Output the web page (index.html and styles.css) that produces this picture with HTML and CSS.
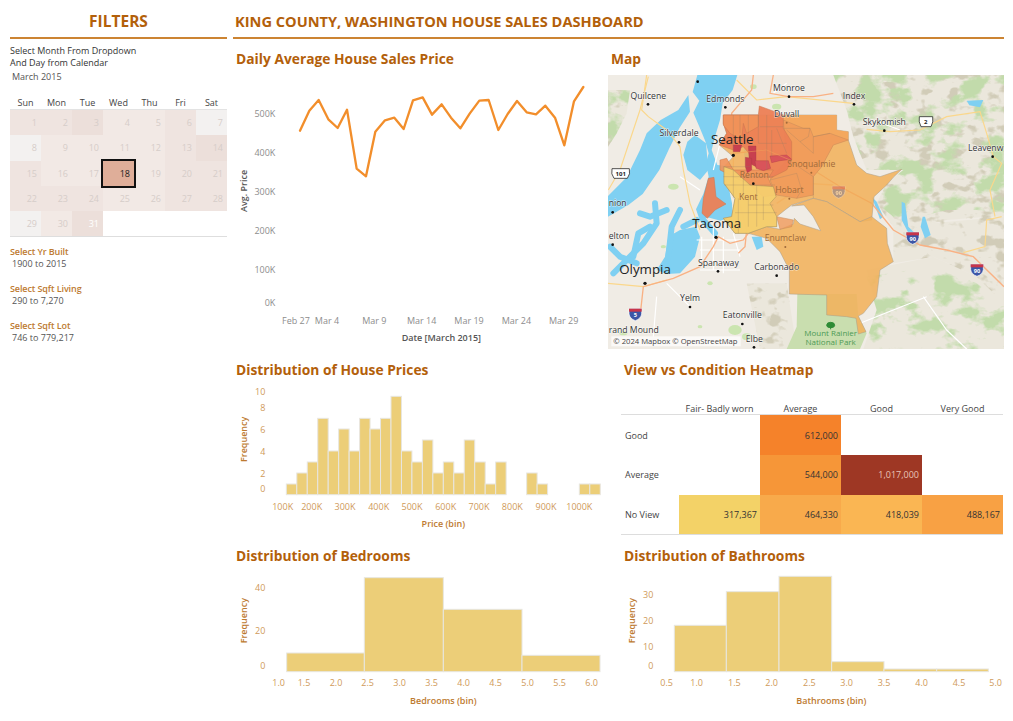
FILE: index.html
```html
<!DOCTYPE html>
<html lang="en">
<head>
<meta charset="utf-8">
<title>King County House Sales Dashboard</title>
<link rel="stylesheet" href="styles.css">
</head>
<body>
<div class="page">
  <aside class="sidebar">
    <h1 class="head head-center">FILTERS</h1>
    <p class="intro">Select Month From Dropdown<br>And Day from Calendar</p>
    <p class="month">March 2015</p>
    <div class="weekdays"><span>Sun</span><span>Mon</span><span>Tue</span><span>Wed</span><span>Thu</span><span>Fri</span><span>Sat</span></div>
    <div class="calendar">
      <div class="s2">1</div><div class="s2">2</div><div class="s3">3</div><div class="s1">4</div><div class="s1">5</div><div class="s2">6</div><div class="s0">7</div>
      <div class="s0">8</div><div class="s1">9</div><div class="s1">10</div><div class="s1">11</div><div class="s1">12</div><div class="s2">13</div><div class="s3">14</div>
      <div class="s2">15</div><div class="s1">16</div><div class="s1">17</div><div class="sel">18</div><div class="s1">19</div><div class="s2">20</div><div class="s2">21</div>
      <div class="s2">22</div><div class="s2">23</div><div class="s2">24</div><div class="s1">25</div><div class="s1">26</div><div class="s2">27</div><div class="s2">28</div>
      <div class="s0">29</div><div class="s1">30</div><div class="s3 wht">31</div><div class="blank"></div><div class="blank"></div><div class="blank"></div><div class="blank"></div>
    </div>
    <div class="filters">
      <div class="filter"><h3>Select Yr Built</h3><p>1900 to 2015</p></div>
      <div class="filter"><h3>Select Sqft Living</h3><p>290 to 7,270</p></div>
      <div class="filter"><h3>Select Sqft Lot</h3><p>746 to 779,217</p></div>
    </div>
  </aside>

  <main class="main">
    <h1 class="head head-left">KING COUNTY, WASHINGTON HOUSE SALES DASHBOARD</h1>
    <div class="grid">
      <section class="panel row1">
        <h2 class="title t-top">Daily Average House Sales Price</h2>
        <svg class="chart c-line" viewBox="9 87 1125 843" role="img">
          <g class="lbl end">
            <text x="136" y="230">500K</text><text x="136" y="348">400K</text><text x="136" y="466">300K</text><text x="136" y="583">200K</text><text x="136" y="700">100K</text><text x="136" y="799">0K</text>
          </g>
          <g class="lbl mid">
            <text x="198" y="851">Feb 27</text><text x="291" y="851">Mar 4</text><text x="433" y="851">Mar 9</text><text x="575" y="851">Mar 14</text><text x="717" y="851">Mar 19</text><text x="859" y="851">Mar 24</text><text x="1001" y="851">Mar 29</text>
          </g>
          <text class="axis dark mid" x="634" y="903">Date [March 2015]</text>
          <text class="axis dark mid" transform="translate(52 453) rotate(-90)">Avg. Price</text>
          <polyline class="trend" points="210,272 238,212 266,180 295,238 323,264 351,209 380,386 408,409 436,275 465,241 493,233 521,267 549,181 578,172 606,224 635,193 663,233 691,265 719,221 748,182 776,180 805,270 833,222 861,183 890,217 918,223 946,197 975,233 1003,316 1032,184 1060,141"/>
        </svg>
      </section>

      <section class="panel row1">
        <h2 class="title t-top">Map</h2>
        <svg class="map" viewBox="24 15 1188 822" role="img">
          <defs>
            <filter id="terrain" x="0" y="0" width="100%" height="100%" color-interpolation-filters="sRGB">
              <feTurbulence type="fractalNoise" baseFrequency="0.013 0.019" numOctaves="4" seed="7" result="n"/>
              <feColorMatrix in="n" type="matrix" values="0 0 0 0 0.76  0 0 0 0 0.86  0 0 0 0 0.67  5 5 0 0 -4.9" result="g"/>
              <feComposite in="g" in2="SourceAlpha" operator="in"/>
            </filter>
            <filter id="rock" x="0" y="0" width="100%" height="100%" color-interpolation-filters="sRGB">
              <feTurbulence type="fractalNoise" baseFrequency="0.022 0.03" numOctaves="3" seed="3" result="n"/>
              <feColorMatrix in="n" type="matrix" values="0 0 0 0 0.82  0 0 0 0 0.80  0 0 0 0 0.72  5 5 0 0 -5.3" result="g"/>
              <feComposite in="g" in2="SourceAlpha" operator="in"/>
            </filter>
            <clipPath id="mapclip"><rect x="24" y="15" width="1188" height="822"/></clipPath>
          </defs>
          <g clip-path="url(#mapclip)">
            <rect class="land" x="24" y="15" width="1188" height="822"/>
            <g class="mt-base">
              <path d="M700,15 L1212,15 L1212,440 L1160,440 L1040,450 L960,470 L880,470 L830,400 L860,340 L910,300 L800,300 L760,200 L740,120 Z"/>
              <path d="M24,60 L90,60 L80,130 L50,190 L24,230 Z"/>
              <path d="M880,470 L1212,440 L1212,700 L1130,620 L1000,560 L880,580 Z"/>
              <path d="M800,600 L1000,560 L1130,620 L1212,680 L1212,837 L790,837 L830,720 Z"/>
              <path d="M440,640 L560,640 L590,837 L480,837 Z"/>
            </g>
            <g class="mt-rock" filter="url(#rock)">
              <path d="M700,15 L1212,15 L1212,700 L1130,620 L1000,560 L880,580 L880,470 L830,400 L860,340 L910,300 L800,300 L760,200 L740,120 Z"/>
              <path d="M440,640 L560,640 L590,837 L480,837 Z"/>
              <path d="M24,60 L90,60 L80,130 L50,190 L24,230 Z"/>
            </g>
            <g class="mt-green" filter="url(#terrain)">
              <path d="M700,15 L1212,15 L1212,430 L1130,420 L1040,420 L960,440 L880,440 L830,400 L860,340 L910,300 L800,300 L760,200 L740,120 Z"/>
              <path d="M24,60 L90,60 L80,130 L50,190 L24,230 Z"/>
              <path d="M800,620 L1000,590 L1130,640 L1212,700 L1212,837 L790,837 L830,720 Z"/>
            </g>
            <path class="park" d="M592,672 L770,672 L775,740 L800,790 L780,837 L560,837 L590,770 Z"/>
            <g class="parks">
              <ellipse cx="220" cy="350" rx="16" ry="9"/><ellipse cx="405" cy="780" rx="20" ry="15"/><ellipse cx="440" cy="800" rx="14" ry="10"/>
              <ellipse cx="130" cy="330" rx="9" ry="5"/><ellipse cx="190" cy="530" rx="8" ry="5"/><ellipse cx="530" cy="110" rx="14" ry="9"/>
              <ellipse cx="330" cy="640" rx="8" ry="6"/><ellipse cx="70" cy="790" rx="12" ry="6"/><ellipse cx="300" cy="770" rx="7" ry="5"/>
              <ellipse cx="460" cy="50" rx="10" ry="7"/>
            </g>
            <g class="water">
              <path d="M292,15 L412,15 L398,60 L368,100 L360,150 L348,190 L335,240 L352,285 L398,290 L382,332 L396,400 L398,438 L362,452 L322,442 L300,452 L288,418 L310,372 L326,320 L318,280 L326,250 L316,214 L298,170 L280,128 L298,92 L278,66 Z"/>
              <path d="M235,120 L265,75 L270,125 L238,175 L208,235 L178,300 L128,372 L85,405 L24,440 L24,378 L80,322 L120,240 L140,190 L182,150 Z"/>
              <path d="M262,215 L285,195 L318,220 L325,300 L300,330 L262,300 L250,255 Z"/>
              <path d="M205,500 L240,480 L288,470 L300,500 L285,560 L240,610 L200,612 L170,600 L195,560 Z"/>
              <path d="M425,160 L440,150 L455,230 L450,305 L436,310 L432,240 Z"/>
              <path d="M455,500 L485,500 L490,530 L470,540 Z"/>
              <path d="M1100,92 L1150,90 L1140,112 L1108,106 Z"/>
              <path d="M905,395 L915,400 L925,470 L945,490 L925,488 L905,450 Z"/>
              <path d="M968,440 L975,440 L992,495 L975,505 L962,470 Z"/>
              <path d="M815,380 L830,395 L850,440 L840,448 Z"/>
            </g>
            <g class="water-line">
              <path d="M165,400 L170,460 L130,520 L70,580 L40,610"/>
              <path d="M240,420 L215,470 L205,560"/>
              <path d="M290,450 L250,470"/>
              <path d="M150,470 L115,490 L100,560"/>
              <path d="M310,450 L345,490"/>
              <path d="M200,420 L150,440 L120,430"/>
              <path d="M110,580 L60,560 L30,530"/>
            </g>
            <g class="road-white">
              <path d="M290,510 L430,510 M300,540 L420,540 M340,470 L340,600 M305,500 L305,570 M370,500 L370,610 M300,600 L420,600 M400,490 L420,560"/>
              <path d="M360,220 L340,300 M240,320 L300,360 M980,680 L880,720 L780,760 M970,680 L1040,780 L1100,837"/>
              <path d="M820,150 L900,180 M520,70 L560,40 M200,640 L270,710 M170,680 L160,800"/>
            </g>
            <g class="road-yellow">
              <path d="M140,15 L125,120 L145,140 L200,180 L240,230 L250,300 L270,400 L300,480"/>
              <path d="M25,360 L60,300 L120,120 L145,20"/>
              <path d="M800,178 L870,185 L960,180 L1040,140 L1140,125 L1160,190 L1180,260 L1205,280 L1170,360 L1185,440"/>
              <path d="M1205,440 L1160,450 L1155,530 L1090,548"/>
              <path d="M24,640 L130,650 L200,630"/>
              <path d="M410,30 L470,90 L560,80 L760,100"/>
            </g>
            <g class="road-orange">
              <path d="M120,740 L130,650 L220,625 L300,590 L340,530 L355,500 L390,520 L430,510 L445,490"/>
              <path d="M460,15 L455,60 L420,100 L395,130 L400,250 L400,330 L440,480 L435,530 L415,550"/>
              <path d="M400,250 L500,240 L640,300 L720,350 L815,400 L880,480 L960,525 L1040,540 L1120,560 L1212,650"/>
              <path d="M520,15 L510,70 L565,80 L640,80 L700,70"/>
              <path d="M530,400 L620,340 L700,345"/>
            </g>

            <g class="county">
              <path class="z-base" d="M370,135 L710,135 L710,180 L745,185 L745,210 L755,240 L770,285 L800,310 L840,320 L905,298 L880,322 L860,345 L822,380 L815,450 L780,455 L680,395 L640,385 L575,405 L555,420 L530,440 L530,470 L500,470 L445,490 L405,490 L370,445 L395,440 L405,385 L372,340 L372,290 L400,260 L358,225 L380,190 L370,160 Z"/>
              <path class="z-base" d="M640,385 L680,395 L780,455 L815,440 L860,475 L862,520 L880,575 L840,600 L830,680 L790,730 L775,738 L798,785 L775,792 L768,745 L740,740 L680,735 L680,675 L568,672 L568,600 L540,545 L500,505 L445,490 L500,470 L540,478 L580,462 L583,445 L600,462 L662,482 L640,440 L612,405 L575,408 Z"/>
              <path class="z-ne" d="M550,135 L710,135 L710,180 L745,185 L745,210 L700,225 L665,290 L640,320 L640,375 L590,385 L525,370 L510,330 L560,270 Z"/>
              <path class="z-mid" d="M550,150 L610,175 L630,175 L640,200 L690,190 L745,210 L700,225 L665,290 L640,320 L640,375 L590,385 L530,375 L510,330 L560,270 Z"/>
              <path class="z-mid" d="M530,440 L580,450 L575,470 L540,478 Z"/>
              <path class="z-hot" d="M370,135 L475,135 L478,108 L525,125 L550,135 L550,175 L575,215 L575,270 L560,300 L510,325 L490,300 L460,265 L430,230 L400,240 L358,225 L380,190 L370,160 Z"/>
              <path class="z-warm" d="M370,135 L475,135 L475,170 L440,190 L430,160 L425,210 L390,190 L370,165 Z"/>
              <path class="z-warm" d="M360,270 L380,265 L400,300 L520,300 L505,325 L520,360 L530,375 L490,380 L450,345 L400,320 L360,300 Z"/>
              <path class="z-cool" d="M372,290 L400,300 L450,345 L520,350 L528,380 L510,400 L530,440 L530,470 L500,470 L445,490 L405,490 L370,445 L395,440 L405,385 L372,340 Z"/>
              <path class="z-hot" d="M325,325 L342,322 L348,380 L378,402 L345,420 L322,445 L306,430 L310,385 Z"/>
              <path class="z-red" d="M400,225 L425,225 L420,245 L400,245 Z"/>
              <path class="z-red" d="M445,228 L468,228 L468,290 L448,280 Z"/>
              <path class="z-red" d="M436,262 L455,265 L455,300 L442,308 L436,290 Z"/>
              <path class="z-dred" d="M510,258 L560,255 L575,268 L540,272 L515,278 Z"/>
              <path class="z-dred" d="M465,272 L505,272 L512,295 L490,302 L468,295 Z"/>
            </g>
            <g class="zip">
              <path d="M400,135 V240 M420,135 V190 M445,135 V190 M475,135 V220 M500,135 V300 M515,180 V260 M480,170 H550 M475,220 H560 M530,175 L560,250"/>
              <path d="M370,320 H520 M372,345 H525 M400,300 V385 M430,310 V380 M470,345 V470 M415,385 V490 M445,380 V470 M405,428 H530 M445,405 H520 M490,380 V450 M370,290 H450 M510,330 L590,310 L605,360 L590,385"/>
              <path d="M550,175 L610,175 L630,175 L625,200 L600,215 L640,250 L640,200 L690,190 M565,270 L640,320 L640,385 M600,215 L560,180"/>
            </g>

            <g class="road-faded">
              <path d="M400,250 L500,240 L640,300 L720,350 L815,400"/>
            </g>

            <g class="dots">
              <circle cx="293" cy="35" r="4"/><circle cx="144" cy="103" r="4"/><circle cx="376" cy="112" r="4"/><circle cx="567" cy="80" r="4"/><circle cx="762" cy="103" r="4"/>
              <circle cx="853" cy="182" r="4"/><circle cx="237" cy="217" r="4"/><circle cx="1178" cy="260" r="4"/><circle cx="400" cy="256" r="5"/><circle cx="460" cy="341" r="4"/>
              <circle cx="38" cy="427" r="4"/><circle cx="38" cy="524" r="4"/><circle cx="348" cy="502" r="5"/><circle cx="354" cy="604" r="4"/><circle cx="530" cy="617" r="4"/>
              <circle cx="135" cy="640" r="5"/><circle cx="270" cy="711" r="4"/><circle cx="427" cy="762" r="4"/><circle cx="462" cy="832" r="4"/>
              <circle cx="634" cy="308" r="3" class="dot-f"/><circle cx="568" cy="386" r="3" class="dot-f"/><circle cx="556" cy="531" r="3" class="dot-f"/><circle cx="560" cy="158" r="3" class="dot-f"/>
            </g>

            <g class="place">
              <text x="567" y="63">Monroe</text><text x="145" y="86">Quilcene</text><text x="376" y="95">Edmonds</text><text x="762" y="87">Index</text>
              <text x="853" y="165">Skykomish</text><text x="237" y="199">Silverdale</text><text x="1104" y="244" class="st">Leavenw</text>
              <text x="26" y="409" class="st">nion</text><text x="26" y="506" class="st">elton</text>
              <text x="355" y="587">Spanaway</text><text x="530" y="600">Carbonado</text><text x="270" y="694">Yelm</text><text x="427" y="744">Eatonville</text>
              <text x="26" y="789" class="st">rand Mound</text><text x="463" y="815">Elbe</text><text x="560" y="141">Duvall</text>
            </g>
            <g class="place big">
              <text x="397" y="222">Seattle</text><text x="350" y="473">Tacoma</text><text x="135" y="611">Olympia</text>
            </g>
            <g class="place faded">
              <text x="634" y="291">Snoqualmie</text><text x="463" y="324">Renton</text><text x="568" y="369">Hobart</text><text x="445" y="391">Kent</text><text x="556" y="513">Enumclaw</text>
            </g>
            <g class="park-label">
              <text x="692" y="797">Mount Rainier</text><text x="692" y="824">National Park</text>
              <path class="tree" d="M692,778 V768 M680,766 A12,9 0 1 1 704,766 A12,7 0 0 1 680,766 Z"/>
            </g>

            <g class="shield-us">
              <path d="M36,296 H88 Q92,312 82,325 H42 Q32,312 36,296 Z"/>
              <text x="62" y="317">101</text>
              <path d="M958,140 H998 Q1001,156 993,170 H963 Q955,156 958,140 Z"/>
              <text x="977" y="162">2</text>
            </g>
            <g class="shield-i">
              <g><path class="si-blue" d="M919,487 H957 V503 Q955,517 938,523 Q921,517 919,503 Z"/><path class="si-red" d="M919,487 H957 V496 H919 Z"/><text x="938" y="513">90</text></g>
              <g><path class="si-blue" d="M1112,583 H1150 V599 Q1148,613 1131,619 Q1114,613 1112,599 Z"/><path class="si-red" d="M1112,583 H1150 V592 H1112 Z"/><text x="1131" y="609">90</text></g>
              <g><path class="si-blue" d="M87,716 H125 V732 Q123,746 106,752 Q89,746 87,732 Z"/><path class="si-red" d="M87,716 H125 V725 H87 Z"/><text x="106" y="742">5</text></g>
              <g class="si-faded"><path class="si-blue" d="M697,349 H735 V365 Q733,379 716,385 Q699,379 697,365 Z"/><path class="si-red" d="M697,349 H735 V358 H697 Z"/><text x="716" y="375">90</text></g>
            </g>
            <rect class="attrib-bg" x="34" y="799" width="388" height="30"/>
            <text class="attrib" x="40" y="822">© 2024 Mapbox © OpenStreetMap</text>
          </g>
        </svg>
      </section>

      <section class="panel row2">
        <h2 class="title">Distribution of House Prices</h2>
        <svg class="chart c-row2" viewBox="9 60 1125 498" role="img">
          <g class="lbl-o end">
            <text x="106" y="106">10</text><text x="106" y="154">8</text><text x="106" y="219">6</text><text x="106" y="284">4</text><text x="106" y="350">2</text><text x="106" y="395">0</text>
          </g>
          <g class="bars">
            <rect x="169" y="372" width="31.4" height="32"/><rect x="200.4" y="339" width="31.4" height="65"/><rect x="231.8" y="306" width="31.4" height="98"/><rect x="263.2" y="175" width="31.4" height="229"/><rect x="294.6" y="273" width="31.4" height="131"/><rect x="326" y="207" width="31.4" height="197"/><rect x="357.4" y="273" width="31.4" height="131"/><rect x="388.8" y="175" width="31.4" height="229"/><rect x="420.2" y="207" width="31.4" height="197"/><rect x="451.6" y="175" width="31.4" height="229"/><rect x="483" y="109" width="31.4" height="295"/><rect x="514.4" y="273" width="31.4" height="131"/><rect x="545.8" y="306" width="31.4" height="98"/><rect x="577.2" y="240" width="31.4" height="164"/><rect x="608.6" y="339" width="31.4" height="65"/><rect x="640" y="306" width="31.4" height="98"/><rect x="671.4" y="339" width="31.4" height="65"/><rect x="702.8" y="240" width="31.4" height="164"/><rect x="734.2" y="306" width="31.4" height="98"/><rect x="765.6" y="372" width="31.4" height="32"/><rect x="797" y="306" width="31.4" height="98"/><rect x="890" y="339" width="31.4" height="65"/><rect x="921.4" y="372" width="31.4" height="32"/><rect x="1048" y="372" width="31.4" height="32"/><rect x="1079.4" y="372" width="31.4" height="32"/>
          </g>
          <g class="lbl-o mid">
            <text x="158" y="450">100K</text><text x="245" y="450">200K</text><text x="345" y="450">300K</text><text x="446" y="450">400K</text><text x="546" y="450">500K</text><text x="647" y="450">600K</text><text x="747" y="450">700K</text><text x="847" y="450">800K</text><text x="948" y="450">900K</text><text x="1048" y="450">1000K</text>
          </g>
          <text class="axis mid" x="640" y="501">Price (bin)</text>
          <text class="axis mid" transform="translate(52 238) rotate(-90)">Frequency</text>
        </svg>
      </section>

      <section class="panel row2 heat-panel">
        <h2 class="title t-in">View vs Condition Heatmap</h2>
        <div class="heat">
          <div class="hh"></div><div class="hh">Fair- Badly worn</div><div class="hh">Average</div><div class="hh">Good</div><div class="hh">Very Good</div>
          <div class="rh">Good</div><div class="hc"></div><div class="hc h-612">612,000</div><div class="hc"></div><div class="hc"></div>
          <div class="rh">Average</div><div class="hc"></div><div class="hc h-544">544,000</div><div class="hc h-1017">1,017,000</div><div class="hc"></div>
          <div class="rh">No View</div><div class="hc h-317">317,367</div><div class="hc h-464">464,330</div><div class="hc h-418">418,039</div><div class="hc h-488">488,167</div>
        </div>
      </section>

      <section class="panel row3">
        <h2 class="title">Distribution of Bedrooms</h2>
        <svg class="chart c-row3" viewBox="9 78 1125 462" role="img">
          <g class="lbl-o end">
            <text x="106" y="154">40</text><text x="106" y="281">20</text><text x="106" y="387">0</text>
          </g>
          <g class="bars">
            <rect x="170" y="339" width="233" height="56"/><rect x="403" y="113" width="237" height="282"/><rect x="640" y="208" width="236" height="187"/><rect x="876" y="346" width="234" height="49"/>
          </g>
          <g class="lbl-o mid">
            <text x="146" y="439">1.0</text><text x="222" y="439">1.5</text><text x="318" y="439">2.0</text><text x="413" y="439">2.5</text><text x="509" y="439">3.0</text><text x="605" y="439">3.5</text><text x="701" y="439">4.0</text><text x="797" y="439">4.5</text><text x="893" y="439">5.0</text><text x="989" y="439">5.5</text><text x="1085" y="439">6.0</text>
          </g>
          <text class="axis mid" x="640" y="492">Bedrooms (bin)</text>
          <text class="axis mid" transform="translate(52 242) rotate(-90)">Frequency</text>
        </svg>
      </section>

      <section class="panel row3 side3">
        <h2 class="title t-in">Distribution of Bathrooms</h2>
        <svg class="chart c-row3b" viewBox="-6 78 1188 462" role="img">
          <g class="lbl-o end">
            <text x="130" y="175">30</text><text x="130" y="251">20</text><text x="130" y="329">10</text><text x="130" y="387">0</text>
          </g>
          <g class="bars">
            <rect x="193" y="256" width="156" height="139"/><rect x="349" y="155" width="158" height="240"/><rect x="507" y="109" width="158" height="286"/><rect x="665" y="365" width="157" height="30"/><rect x="822" y="387" width="158" height="8"/><rect x="980" y="387" width="155" height="8"/>
          </g>
          <g class="lbl-o mid">
            <text x="170" y="439">0.5</text><text x="260" y="439">1.0</text><text x="373" y="439">1.5</text><text x="485" y="439">2.0</text><text x="598" y="439">2.5</text><text x="710" y="439">3.0</text><text x="822" y="439">3.5</text><text x="935" y="439">4.0</text><text x="1047" y="439">4.5</text><text x="1157" y="439">5.0</text>
          </g>
          <text class="axis mid" x="664" y="492">Bathrooms (bin)</text>
          <text class="axis mid" transform="translate(76 242) rotate(-90)">Frequency</text>
        </svg>
      </section>
    </div>
  </main>
</div>
</body>
</html>
```

FILE: styles.css
```css
* { box-sizing: border-box; }
html, body { margin: 0; padding: 0; background: #fff; }
body { width: 1013px; height: 721px; overflow: hidden; font-family: "Open Sans", "Noto Sans", sans-serif; color: #444; }
h1, h2, h3, p { margin: 0; }

.page { display: grid; grid-template-columns: 217px 771px; column-gap: 6px; padding-left: 10px; }

.head { height: 39px; padding-top: 11px; font-size: 14.6px; line-height: 20px; font-weight: 700; color: #b3600a; border-bottom: 2px solid #cc8432; }
.head-center { text-align: center; font-size: 15.5px; }
.head-left { padding-left: 2px; }

.intro { margin-top: 6px; font-size: 9px; line-height: 12px; color: #333; }
.month { margin-top: 2px; padding-left: 2px; font-size: 9px; line-height: 12px; color: #555; }

.weekdays { display: grid; grid-template-columns: repeat(7, 1fr); margin-top: 13px; height: 13px; font-size: 9px; line-height: 13px; text-align: center; color: #444; }

.calendar { display: grid; grid-template-columns: repeat(7, 1fr); grid-auto-rows: 25.3px; border-top: 1px solid #e3e3e3; border-bottom: 1px solid #dedede; font-size: 9px; }
.calendar div { display: flex; align-items: center; justify-content: flex-end; padding-right: 4px; color: #d6cdc9; }
.s0 { background: #f3f1f0; }
.s1 { background: #f2e9e5; }
.s2 { background: #efe4e0; }
.s3 { background: #ecdfda; }
.calendar .wht { color: #fff; }
.calendar .blank { background: #fff; }
.calendar .sel { background: #dfae99; color: #222; outline: 2px solid #111; position: relative; z-index: 1; }

.filters { display: flex; flex-direction: column; gap: 13px; margin-top: 9px; }
.filter h3 { font-size: 9px; line-height: 12px; font-weight: 600; letter-spacing: -0.1px; color: #bd7a30; }
.filter p { padding-left: 2px; font-size: 9px; line-height: 12px; color: #555; }

.grid { display: grid; grid-template-columns: 375px 396px; grid-template-rows: 321px 186px 174px; }
.panel { display: flex; flex-direction: column; min-width: 0; }

.title { height: 20px; padding-left: 3px; font-size: 13.8px; line-height: 20px; font-weight: 700; color: #b3600a; }
.t-top { margin-top: 10px; }
.t-in { padding-left: 16px; }
.chart { display: block; width: 100%; }
.row1 .c-line { height: 281px; }
.c-row2 { height: 166px; }
.c-row3, .c-row3b { height: 154px; }
.map { display: block; width: 396px; height: 274px; margin-top: 6px; }

.chart text { font-size: 27px; }
.lbl { fill: #8d8d8d; }
.lbl-o { fill: #cf9a5a; }
.end { text-anchor: end; }
.mid { text-anchor: middle; }
.axis { fill: #bd7a30; font-weight: 600; }
.axis.dark { fill: #555; }
.trend { fill: none; stroke: #f28e2b; stroke-width: 7; stroke-linejoin: round; stroke-linecap: round; }
.bars rect { fill: #ecce78; stroke: #e8e6e0; stroke-width: 3; }

.heat { display: grid; grid-template-columns: 58px repeat(4, 81px); grid-template-rows: 35px 40px 39.5px 39.5px; margin-left: 13px; width: 382px; font-size: 9px; color: #444; border-bottom: 1px solid #ddd; }
.hh { display: flex; align-items: flex-end; justify-content: center; line-height: 11px; border-bottom: 1px solid #ddd; }
.rh { display: flex; align-items: center; padding-left: 4px; }
.hc { display: flex; align-items: center; justify-content: flex-end; padding-right: 3px; color: #333; }
.h-612 { background: #f5822a; }
.h-544 { background: #f69638; }
.h-1017 { background: #9e3724; color: #e8c4b8; }
.h-317 { background: #f3d267; }
.h-464 { background: #f8aa4b; }
.h-418 { background: #fab653; }
.h-488 { background: #f8a144; }

.land { fill: #f0ece5; }
.mt-base path { fill: #ebe7dc; }
.mt-green path, .mt-rock path { fill: #000; }
.park { fill: #c9deaf; }
.parks ellipse { fill: #cbe5b0; }
.water path { fill: #7fd0f2; }
.water-line path { fill: none; stroke: #7fd0f2; stroke-width: 18; stroke-linejoin: round; stroke-linecap: round; }
.road-white path { fill: none; stroke: #fff; stroke-width: 3.5; }
.road-yellow path { fill: none; stroke: #fbd78b; stroke-width: 3.5; }
.road-orange path { fill: none; stroke: #f9b184; stroke-width: 4; }
.road-faded path { fill: none; stroke: #f2a25a; stroke-width: 3; opacity: .5; }

.z-base { fill: #f1b25c; fill-opacity: .88; stroke: #a89c88; stroke-width: 1.5; }
.z-ne { fill: #f4a65c; fill-opacity: .9; stroke: none; }
.z-mid { fill: #f09a5a; fill-opacity: .8; stroke: #c78a5a; stroke-width: 1.5; }
.z-hot { fill: #ec8055; fill-opacity: .95; stroke: #c9764f; stroke-width: 1.5; }
.z-warm { fill: #f1935a; fill-opacity: .9; stroke: #c9764f; stroke-width: 1.5; }
.z-cool { fill: #f5cf6f; fill-opacity: .92; stroke: #a8945a; stroke-width: 1.5; }
.z-red { fill: #c8404f; stroke: #a83a44; stroke-width: 1; }
.z-dred { fill: #d9545a; stroke: #a83a44; stroke-width: 1; }
.zip path { fill: none; stroke: #8f7d62; stroke-width: 1.5; opacity: .5; }

.dots circle { fill: #111; }
.dots .dot-f { fill: #a06a3a; }
.place text { font-size: 26px; fill: #333; text-anchor: middle; stroke: #fff; stroke-width: 3; stroke-opacity: .7; paint-order: stroke; }
.place .st { text-anchor: start; }
.place.big text { font-size: 40px; fill: #222; stroke: none; }
.place.faded text { fill: #a06a3a; stroke: none; }
.park-label text { font-size: 24px; fill: #4d9a55; text-anchor: middle; }
.tree { fill: #2e8b35; stroke: #2e8b35; stroke-width: 3; }
.shield-us path { fill: #fff; stroke: #333; stroke-width: 2.5; }
.shield-us text { font-size: 18px; font-weight: 700; fill: #222; text-anchor: middle; }
.si-blue { fill: #3c56a6; stroke: #fff; stroke-width: 2; }
.si-red { fill: #c8354a; }
.shield-i text { font-size: 17px; font-weight: 700; fill: #fff; text-anchor: middle; }
.si-faded { opacity: .35; }
.attrib-bg { fill: #fff; fill-opacity: .7; }
.attrib { font-size: 23px; fill: #444; }
```
